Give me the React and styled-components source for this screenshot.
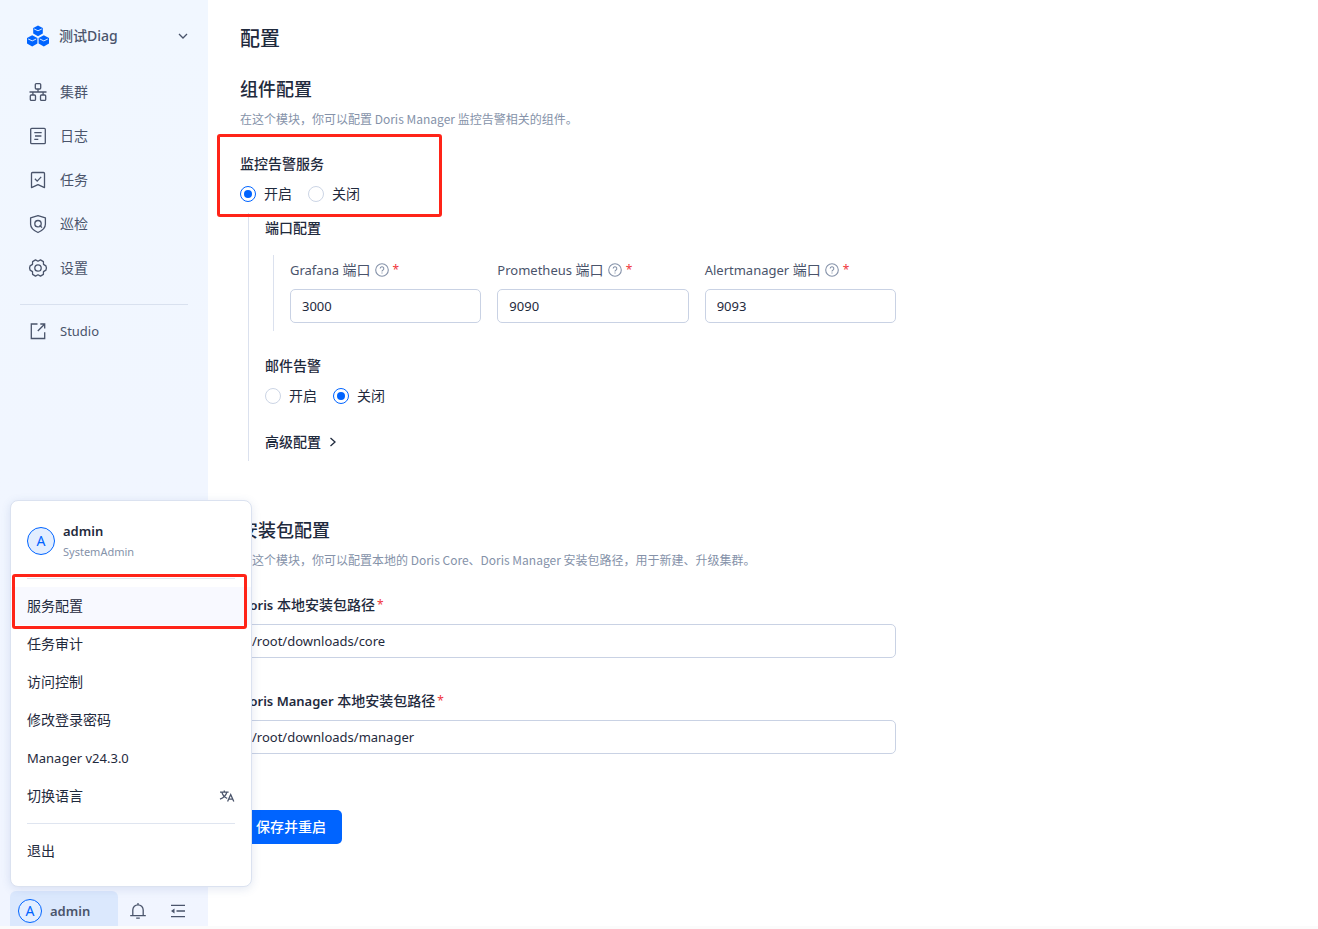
import React, { useState } from 'react';
import styled, { createGlobalStyle, css } from 'styled-components';

const GlobalStyle = createGlobalStyle`
    * {
        box-sizing: border-box;
    }

    body {
        margin: 0;
        background: #fbfbfb;
        color: #1f2a3d;
        font-family: "Noto Sans", "Noto Sans CJK SC", sans-serif;
        font-size: 14px;
        line-height: 22px;
    }

    h1, h2, h3, p, ul {
        margin: 0;
        padding: 0;
    }

    button, input {
        font: inherit;
        color: inherit;
    }
`;

/* ---------- icons ---------- */

const Icon = styled.svg.attrs({ fill: 'none', stroke: 'currentColor', 'aria-hidden': true })`
    flex: none;
    display: block;
    width: ${(props) => props.$size || 20}px;
    height: ${(props) => props.$size || 20}px;
    stroke-width: 1.3;
`;

const LogoIcon = () => (
    <Icon $size={22} viewBox="0 0 22 22">
        <g stroke="none" fill="#0064ff">
            <path d="M11 .5l4.800 2.600v5.400L11 11.200l-4.800-2.700V3.100z" />
            <path d="M5.200 10.300l5.200 2.700v5.600l-5.200 2.800L0 18.600V13z" />
            <path d="M16.800 10.300L22 13v5.600l-5.200 2.800-5.200-2.800V13z" />
        </g>
        <g stroke="#f1f6ff" strokeWidth="0.9">
            <path d="M7.200 4L11 5.800l3.800-1.800" />
            <path d="M1.200 14l4 1.900 4-1.900" />
            <path d="M12.800 14l4 1.900 4-1.900" />
        </g>
    </Icon>
);

const ClusterIcon = () => (
    <Icon viewBox="0 0 20 20">
        <rect x="7.300" y="1.600" width="5.400" height="5.400" rx="1" />
        <rect x="2.300" y="13" width="5.200" height="5.400" rx="1" />
        <rect x="12.500" y="13" width="5.200" height="5.400" rx="1" />
        <path d="M10 7v3M1.500 10h17M4.900 10v3M15.100 10v3" />
    </Icon>
);

const LogIcon = () => (
    <Icon viewBox="0 0 20 20">
        <rect x="2.700" y="2.300" width="14.600" height="15.400" rx="1" />
        <path d="M6.300 6.700h7.400M7 10h6.400M6.300 13.300h4" />
    </Icon>
);

const TaskIcon = () => (
    <Icon viewBox="0 0 20 20">
        <path d="M3.500 17.600V3.500a1 1 0 0 1 1-1h11a1 1 0 0 1 1 1v14.100L10 14.600z" strokeLinejoin="round" />
        <path d="M6.900 8.800l2.300 2.300 4-4.200" />
    </Icon>
);

const InspectIcon = () => (
    <Icon viewBox="0 0 20 20">
        <path d="M10 1.600l7.400 2.200v6.500c0 3.700-3 6.300-7.400 8.200-4.400-1.900-7.400-4.500-7.400-8.200V3.800z" strokeLinejoin="round" />
        <circle cx="10" cy="9.700" r="3.200" />
        <path d="M11.600 11.300l2.400 2.300" />
    </Icon>
);

const SettingIcon = () => (
    <Icon viewBox="0 0 20 20">
        <path
            strokeLinejoin="round"
            d="M7.500 1.900L10 3.300l2.500-1.400 2.900 1.700.100 2.800 2.400 1.500c.700 1.400.700 2.800 0 4.200l-2.400 1.500-.100 2.800-2.900 1.700-2.500-1.400-2.500 1.400-2.900-1.700-.100-2.800-2.400-1.500c-.700-1.400-.700-2.800 0-4.200l2.400-1.500.100-2.800z"
        />
        <circle cx="10" cy="10" r="3.200" />
    </Icon>
);

const StudioIcon = () => (
    <Icon viewBox="0 0 20 20">
        <path d="M9.500 3H3.300v14.500h13.400v-6.300M12.300 3h4.400v4.500M16.500 3.200L9.800 10" />
    </Icon>
);

const BellIcon = () => (
    <Icon viewBox="0 0 20 20">
        <path d="M10 2v2M4.800 14.500V9a5.200 5.200 0 0 1 10.400 0v5.500M2.200 14.600h15.600M8.200 17.200h3.600" />
    </Icon>
);

const FoldIcon = () => (
    <Icon viewBox="0 0 20 20">
        <path d="M3 4.300h14M8.500 10H17M3 15.700h14" />
        <path d="M6.500 7.600v4.800L3 10z" fill="currentColor" stroke="none" />
    </Icon>
);

const ChevronDown = () => (
    <Icon $size={10} viewBox="0 0 10 10">
        <path d="M1 3l4 4 4-4" />
    </Icon>
);

const ChevronRight = () => (
    <Icon $size={10} viewBox="0 0 10 10">
        <path d="M1.500 1l4.500 4-4.500 4" />
    </Icon>
);

const HelpIcon = () => (
    <Icon $size={14} viewBox="0 0 14 14">
        <circle cx="7" cy="7" r="6.300" strokeWidth="1.100" />
        <path d="M5.200 5.600a1.800 1.800 0 1 1 2.600 1.600c-.600.300-.800.500-.800 1.200M7 9.500v1.100" strokeWidth="1.100" />
    </Icon>
);

const TranslateIcon = () => (
    <Icon $size={16} viewBox="0 0 16 16">
        <path d="M1 4.200h8.600M5.300 2.500v1.700M2.900 4.400c.900 3 2.900 5 5.300 6M7.800 4.400C6.900 7.600 4.600 9.900 1 11.200" />
        <path d="M8.600 13.400L11.700 6.600l3.100 6.800M9.600 11.200h4.200" />
    </Icon>
);

// Noto Sans runs larger than the Chinese glyphs beside it
const Latin = styled.span`
    font-size: 13px;
`;

/* ---------- sidebar ---------- */

const Page = styled.div`
    display: flex;
    min-height: 100vh;
    padding-bottom: 3px;
`;

const Sidebar = styled.aside`
    flex: none;
    display: flex;
    flex-direction: column;
    width: 208px;
    background: linear-gradient(180deg, #f1f7ff 0%, #f1f5ff 100%);
    color: #4a546b;
`;

const Workspace = styled.button`
    display: flex;
    align-items: center;
    gap: 10px;
    height: 44px;
    margin: 14px 20px 12px;
    padding: 0 0 0 7px;
    border: 0;
    background: none;
    font-weight: 500;

    span {
        flex: 1;
        text-align: left;
    }
`;

const Nav = styled.nav`
    flex: 1;
    padding: 0 20px;
`;

const NavLink = styled.a`
    display: flex;
    align-items: center;
    gap: 12px;
    height: 44px;
    padding-left: 8px;
    color: inherit;
    text-decoration: none;
`;

const NavDivider = styled.hr`
    height: 1px;
    margin: 14px 0 4px;
    border: 0;
    background: #d9e1ef;
`;

const Footer = styled.div`
    position: relative;
    display: flex;
    align-items: center;
    gap: 20px;
    padding-left: 10px;
`;

const UserButton = styled.button`
    display: flex;
    align-items: center;
    gap: 8px;
    width: 108px;
    height: 35px;
    padding: 4px 8px 0;
    border: 0;
    border-radius: 6px 6px 0 0;
    background: #dbe8fd;
    font-weight: 600;
`;

const IconButton = styled.button`
    padding: 4px 0 0;
    border: 0;
    background: none;
    margin-left: -10px;

    & + & {
        margin-left: 0;
    }
`;

const Avatar = styled.span`
    flex: none;
    display: grid;
    place-items: center;
    width: ${(props) => props.$size}px;
    height: ${(props) => props.$size}px;
    border: 1px solid #0064ff;
    border-radius: 50%;
    background: #e3eeff;
    color: #0064ff;
    font-weight: 400;
`;

/* ---------- user menu ---------- */

const Menu = styled.div`
    position: absolute;
    left: 10px;
    bottom: 39px;
    z-index: 2;
    width: 242px;
    padding: 19px 0 16px;
    border: 1px solid #dbe2f0;
    border-radius: 8px;
    background: #fff;
    color: #1f2a3d;
    box-shadow: 0 2px 10px rgba(60, 90, 160, 0.14);
`;

const Profile = styled.div`
    display: flex;
    align-items: center;
    gap: 8px;
    padding: 0 16px;
`;

const ProfileName = styled.div`
    font-size: 13px;
    font-weight: 600;
`;

const ProfileRole = styled.div`
    color: #8592a9;
    font-size: 11px;
    line-height: 20px;
`;

const MenuDivider = styled.hr`
    height: 1px;
    margin: ${(props) => props.$margin};
    border: 0;
    background: #dfe5f0;
`;

const marked = css`
    &::after {
        content: "";
        position: absolute;
        border: 3px solid #ff2418;
        border-radius: 3px;
        pointer-events: none;
    }
`;

const MenuItem = styled.button`
    position: relative;
    display: flex;
    align-items: center;
    justify-content: space-between;
    width: 100%;
    height: 38px;
    padding: 0 16px;
    border: 0;
    background: ${(props) => (props.$active ? '#f8f9ff' : 'none')};
    text-align: left;

    svg {
        color: #4a546b;
    }

    ${(props) => props.$active && css`
        ${marked}

        &::after {
            inset: -13px 4px -4px 1px;
        }
    `}
`;

/* ---------- content ---------- */

const Main = styled.main`
    flex: 1;
    min-width: 0;
    padding: 24px 32px;
    background: #fff;
`;

const Form = styled.form`
    max-width: 656px;
`;

const Title = styled.h1`
    font-size: 20px;
    font-weight: 500;
    line-height: 30px;
`;

const Section = styled.section`
    margin-top: ${(props) => props.$top}px;
`;

const SectionTitle = styled.h2`
    font-size: 18px;
    font-weight: 500;
    line-height: 28px;
`;

const Description = styled.p`
    margin-top: 6px;
    color: #8592a9;
    font-family: "Noto Sans CJK SC", sans-serif;
    font-size: 12px;
    line-height: 20px;
`;

const Field = styled.div`
    margin-top: ${(props) => props.$top || 0}px;
`;

const RadioField = styled.fieldset`
    margin: 0;
    padding: 0;
    border: 0;

    legend {
        padding: 0;
        font-weight: 500;
    }
`;

const RadioBlock = styled.div`
    position: relative;
    margin-top: 24px;

    ${(props) => props.$marked && css`
        ${marked}

        &::after {
            top: -19px;
            bottom: -12px;
            left: -23px;
            width: 219px;
        }
    `}
`;

const RadioRow = styled.div`
    display: flex;
    gap: 16px;
    margin-top: 8px;
`;

const RadioLabel = styled.label`
    display: flex;
    align-items: center;
    gap: 8px;
`;

const Radio = styled.input.attrs({ type: 'radio' })`
    appearance: none;
    display: grid;
    place-items: center;
    width: 16px;
    height: 16px;
    margin: 0;
    border: 1px solid #ccd5e5;
    border-radius: 50%;
    background: #fff;

    &:checked {
        border-color: #0064ff;
    }

    &:checked::before {
        content: "";
        width: 8px;
        height: 8px;
        border-radius: 50%;
        background: #0064ff;
    }
`;

const Nested = styled.div`
    margin: 8px 0 0 8px;
    padding: 4px 0 8px 16px;
    border-left: 1px solid #dbe1ee;
`;

const SubTitle = styled.h3`
    font-size: 14px;
    font-weight: 500;
`;

const Ports = styled.div`
    display: grid;
    grid-template-columns: repeat(3, 1fr);
    gap: 16px;
    margin: 16px 0 0 8px;
    padding: 4px 0 8px 16px;
    border-left: 1px solid #dbe1ee;
`;

const Label = styled.label`
    display: flex;
    align-items: center;
    gap: ${(props) => (props.$strong ? 2 : 4)}px;
    color: ${(props) => (props.$strong ? '#1f2a3d' : '#4a546b')};
    font-weight: ${(props) => (props.$strong ? 500 : 400)};

    ${Latin} {
        font-weight: ${(props) => (props.$strong ? 600 : 400)};
    }

    svg {
        color: #8592a9;
    }
`;

const Required = styled.span`
    color: #f0353b;
    font-size: 12px;
    font-weight: 400;
`;

const Input = styled.input`
    display: block;
    width: 100%;
    height: 34px;
    margin-top: 8px;
    padding: 0 11px;
    border: 1px solid #c9d2e4;
    border-radius: 5px;
    background: #fff;
    font-size: 13px;
    outline: none;

    &:focus {
        border-color: #0064ff;
    }
`;

const Advanced = styled.button`
    display: flex;
    align-items: center;
    gap: 8px;
    margin-top: 24px;
    padding: 0;
    border: 0;
    background: none;
    font-weight: 500;
`;

const SubmitButton = styled.button`
    height: 34px;
    margin-top: 56px;
    padding: 0 16px;
    border: 0;
    border-radius: 5px;
    background: #0064ff;
    color: #fff;
    font-weight: 500;
`;

const navItems = [
    { text: '集群', icon: ClusterIcon },
    { text: '日志', icon: LogIcon },
    { text: '任务', icon: TaskIcon },
    { text: '巡检', icon: InspectIcon },
    { text: '设置', icon: SettingIcon },
];

const menuItems = ['服务配置', '任务审计', '访问控制', '修改登录密码'];

const ports = [
    { id: 'grafana', name: 'Grafana', value: '3000' },
    { id: 'prometheus', name: 'Prometheus', value: '9090' },
    { id: 'alertmanager', name: 'Alertmanager', value: '9093' },
];

const paths = [
    { id: 'core', name: 'Doris', value: '/root/downloads/core', top: 24 },
    { id: 'manager', name: 'Doris Manager', value: '/root/downloads/manager', top: 32 },
];

function Switcher({ name, title, initial, ...rest }) {
    const [value, setValue] = useState(initial);
    return (
        <RadioBlock {...rest}>
            <RadioField>
                <legend>{title}</legend>
                <RadioRow>
                    {['开启', '关闭'].map((text) => (
                        <RadioLabel key={text}>
                            <Radio name={name} checked={value === text} onChange={() => setValue(text)} />
                            {text}
                        </RadioLabel>
                    ))}
                </RadioRow>
            </RadioField>
        </RadioBlock>
    );
}

function UserMenu() {
    return (
        <Menu>
            <Profile>
                <Avatar $size={28}>A</Avatar>
                <div>
                    <ProfileName>admin</ProfileName>
                    <ProfileRole>SystemAdmin</ProfileRole>
                </div>
            </Profile>
            <MenuDivider $margin="16px 16px 8px" />
            {menuItems.map((text, i) => (
                <MenuItem key={text} type="button" $active={i === 0}>{text}</MenuItem>
            ))}
            <MenuItem type="button">
                <Latin>Manager v24.3.0</Latin>
            </MenuItem>
            <MenuItem type="button">
                切换语言
                <TranslateIcon />
            </MenuItem>
            <MenuDivider $margin="8px 16px" />
            <MenuItem type="button">退出</MenuItem>
        </Menu>
    );
}

export default function App() {
    return (
        <Page>
            <GlobalStyle />
            <Sidebar>
                <Workspace type="button">
                    <LogoIcon />
                    <span>测试Diag</span>
                    <ChevronDown />
                </Workspace>
                <Nav>
                    {navItems.map(({ text, icon: NavIcon }) => (
                        <NavLink key={text} href="#">
                            <NavIcon />
                            {text}
                        </NavLink>
                    ))}
                    <NavDivider />
                    <NavLink href="#">
                        <StudioIcon />
                        <Latin>Studio</Latin>
                    </NavLink>
                </Nav>
                <Footer>
                    <UserMenu />
                    <UserButton type="button">
                        <Avatar $size={24}>A</Avatar>
                        <Latin>admin</Latin>
                    </UserButton>
                    <IconButton type="button" aria-label="通知"><BellIcon /></IconButton>
                    <IconButton type="button" aria-label="收起"><FoldIcon /></IconButton>
                </Footer>
            </Sidebar>
            <Main>
                <Form>
                    <Title>配置</Title>
                    <Section $top={21}>
                        <SectionTitle>组件配置</SectionTitle>
                        <Description>在这个模块，你可以配置 Doris Manager 监控告警相关的组件。</Description>
                        <Switcher name="monitor" title="监控告警服务" initial="开启" $marked />
                        <Nested>
                            <SubTitle>端口配置</SubTitle>
                            <Ports>
                                {ports.map(({ id, name, value }) => (
                                    <Field key={id}>
                                        <Label htmlFor={id}>
                                            <span><Latin>{name}</Latin> 端口</span>
                                            <HelpIcon />
                                            <Required>*</Required>
                                        </Label>
                                        <Input id={id} defaultValue={value} />
                                    </Field>
                                ))}
                            </Ports>
                            <Switcher name="mail" title="邮件告警" initial="关闭" />
                            <Advanced type="button">
                                高级配置
                                <ChevronRight />
                            </Advanced>
                        </Nested>
                    </Section>
                    <Section $top={55}>
                        <SectionTitle>安装包配置</SectionTitle>
                        <Description>在这个模块，你可以配置本地的 Doris Core、Doris Manager 安装包路径，用于新建、升级集群。</Description>
                        {paths.map(({ id, name, value, top }) => (
                            <Field key={id} $top={top}>
                                <Label htmlFor={id} $strong>
                                    <span><Latin>{name}</Latin> 本地安装包路径</span>
                                    <Required>*</Required>
                                </Label>
                                <Input id={id} defaultValue={value} />
                            </Field>
                        ))}
                    </Section>
                    <SubmitButton type="button">保存并重启</SubmitButton>
                </Form>
            </Main>
        </Page>
    );
}
